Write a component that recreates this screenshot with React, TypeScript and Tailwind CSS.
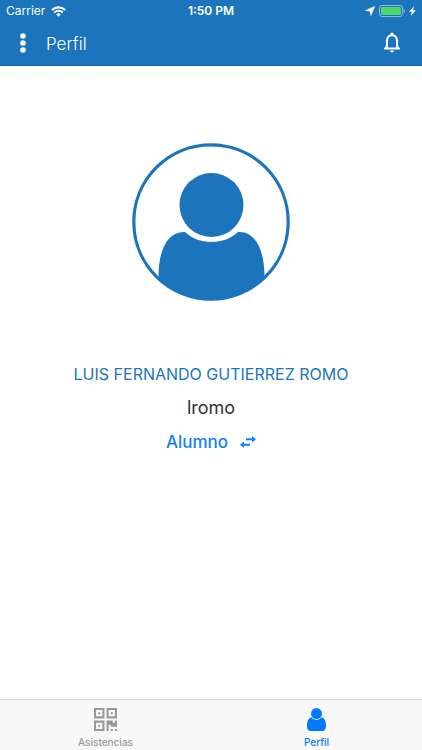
import React, { useState } from 'react';

const tabs = [
  { id: 'asistencias', label: 'Asistencias', Icon: QrIcon },
  { id: 'perfil', label: 'Perfil', Icon: PersonIcon },
];

function WifiIcon() {
  return (
    <svg width="15" height="11" viewBox="0 0 14 10" fill="none" stroke="currentColor">
      <path d="M0.9 3.6a8.7 8.7 0 0 1 12.2 0" strokeWidth="2" />
      <path d="M3 5.9a5.7 5.7 0 0 1 8 0" strokeWidth="1.8" />
      <path d="M7 9.8 4.9 7.7a3 3 0 0 1 4.2 0z" fill="currentColor" stroke="none" />
    </svg>
  );
}

function LocationIcon() {
  return (
    <svg width="10" height="10" viewBox="0 0 10 10" fill="currentColor">
      <path d="M9.8 0.2 5.9 9.8 5 5.2 0.2 4.6z" stroke="currentColor" strokeWidth="0.4" />
    </svg>
  );
}

function BatteryIcon() {
  return (
    <svg width="26" height="12" viewBox="0 0 26 12" fill="none">
      <rect x="0.5" y="0.5" width="23" height="11" rx="2.5" stroke="#8dbadd" />
      <rect x="2" y="2" width="20" height="8" rx="1.2" fill="#4cd964" />
      <path d="M24.6 4v4c.9-.3 1.3-1 1.3-2s-.4-1.7-1.3-2z" fill="#8dbadd" />
    </svg>
  );
}

function BoltIcon() {
  return (
    <svg width="7" height="10" viewBox="0 0 7 10" fill="currentColor">
      <path d="M5 0 0.2 5.7h2.7L1.8 10 6.8 4.2H4z" />
    </svg>
  );
}

function BellIcon() {
  return (
    <svg width="18" height="21" viewBox="0 0 18 21" fill="none">
      <path
        d="M3.9 15.9V8.9c0-3.2 1.9-5.7 5.1-5.7s5.1 2.5 5.1 5.7v7"
        stroke="currentColor"
        strokeWidth="2"
      />
      <path
        d="M7.4 3V2a1.6 1.6 0 0 1 3.2 0v1zM3 14.2 1 16.2V17.5h16v-1.3l-2-2v1.2H3zM7 18.5h4a2 2 0 0 1-4 0z"
        fill="currentColor"
      />
    </svg>
  );
}

function Avatar() {
  return (
    <svg width="158" height="158" viewBox="0 0 158 158" role="img" aria-label="Foto de perfil">
      <defs>
        <clipPath id="frame">
          <circle cx="79" cy="79" r="78" />
        </clipPath>
      </defs>
      <circle cx="79" cy="79" r="77.2" fill="none" stroke="#1c75bc" strokeWidth="3.2" />
      <circle cx="79.5" cy="62" r="32" fill="#1c75bc" />
      <path
        d="M53 89c7 6.5 16 10 26.5 10s19.5-3.5 26.5-10c17-1 26.5 17 26.5 45v24h-106v-24c0-28 9.5-46 26.5-45z"
        fill="#1c75bc"
        clipPath="url(#frame)"
      />
    </svg>
  );
}

function SwapIcon() {
  return (
    <svg width="16" height="12" viewBox="0 0 16 12" fill="currentColor">
      <path d="M6 2.2H12V0L16 3.2 12 6.4V4.2H6z" />
      <path d="M10 7.8H4V5.6L0 8.8 4 12V9.8h6z" />
    </svg>
  );
}

function QrIcon() {
  return (
    <svg width="23" height="23" viewBox="1 1 22 22" fill="currentColor">
      <path
        fillRule="evenodd"
        d="M1 1h10v10H1zM3 3v6h6V3zM13 1h10v10H13zM15 3v6h6V3zM1 13h10v10H1zM3 15v6h6v-6z"
      />
      <path d="M5 5h2v2H5zM17 5h2v2h-2zM5 17h2v2H5z" />
      <path d="M13 13h6v2h2v-2h2v6h-6v-2h-2v6h-2zM17 21h2v2h-2zM21 21h2v2h-2z" />
    </svg>
  );
}

function PersonIcon() {
  return (
    <svg width="19" height="23" viewBox="0 0 19 23" fill="currentColor">
      <circle cx="9.5" cy="5.6" r="5.5" />
      <path d="M4.2 9.3A6.6 6.6 0 0 0 14.8 9.3C17.7 10.2 19 13.6 19 18c0 3-1.3 5-3.9 5H3.9C1.3 23 0 21 0 18c0-4.4 1.3-7.8 4.2-8.7z" />
    </svg>
  );
}

function StatusBar() {
  return (
    <div className="grid h-5 grid-cols-3 items-center px-1.5 pt-0.5 text-xs">
      <div className="flex items-center gap-1.5">
        <span>Carrier</span>
        <WifiIcon />
      </div>
      <span className="text-center font-semibold">1:50 PM</span>
      <div className="flex items-center justify-end gap-1">
        <LocationIcon />
        <BatteryIcon />
        <BoltIcon />
      </div>
    </div>
  );
}

function App() {
  const [activeTab, setActiveTab] = useState('perfil');

  return (
    <div className="flex min-h-screen flex-col bg-white font-['Inter','Liberation_Sans',sans-serif]">
      <header className="border-b border-[#1768a9] bg-[#1c75bc] text-white">
        <StatusBar />
        <div className="flex h-[45px] items-center pr-[21px] pl-5">
          <button aria-label="Menú" className="mr-5">
            <svg width="6" height="20" viewBox="0 0 6 20" fill="currentColor">
              <circle cx="3" cy="3" r="2.8" />
              <circle cx="3" cy="10" r="2.8" />
              <circle cx="3" cy="17" r="2.8" />
            </svg>
          </button>
          <h1 className="flex-1 pt-0.5 text-[17px] leading-6 font-light">Perfil</h1>
          <button aria-label="Notificaciones">
            <BellIcon />
          </button>
        </div>
      </header>

      <main className="flex flex-1 flex-col items-center pt-[77px]">
        <Avatar />
        <h2 className="mt-[61px] text-base leading-6 text-[#1c75bc]">
          LUIS FERNANDO GUTIERREZ ROMO
        </h2>
        <p className="mt-2.5 text-lg leading-6 text-[#333333]">lromo</p>
        <button className="mt-2.5 flex items-center gap-3 text-[17px] leading-6 font-medium text-[#147efb]">
          <span>Alumno</span>
          <SwapIcon />
        </button>
      </main>

      <nav className="flex h-[51px] border-t border-[#d8d8d8] bg-[#f8f8f8]">
        {tabs.map(({ id, label, Icon }) => (
          <button
            key={id}
            onClick={() => setActiveTab(id)}
            className={`flex flex-1 flex-col items-center justify-start gap-[5px] pt-2 text-[10px] leading-3 font-medium ${
              activeTab === id ? 'text-[#007aff]' : 'text-[#999999]'
            }`}
          >
            <Icon />
            <span>{label}</span>
          </button>
        ))}
      </nav>
    </div>
  );
}

export default App;
